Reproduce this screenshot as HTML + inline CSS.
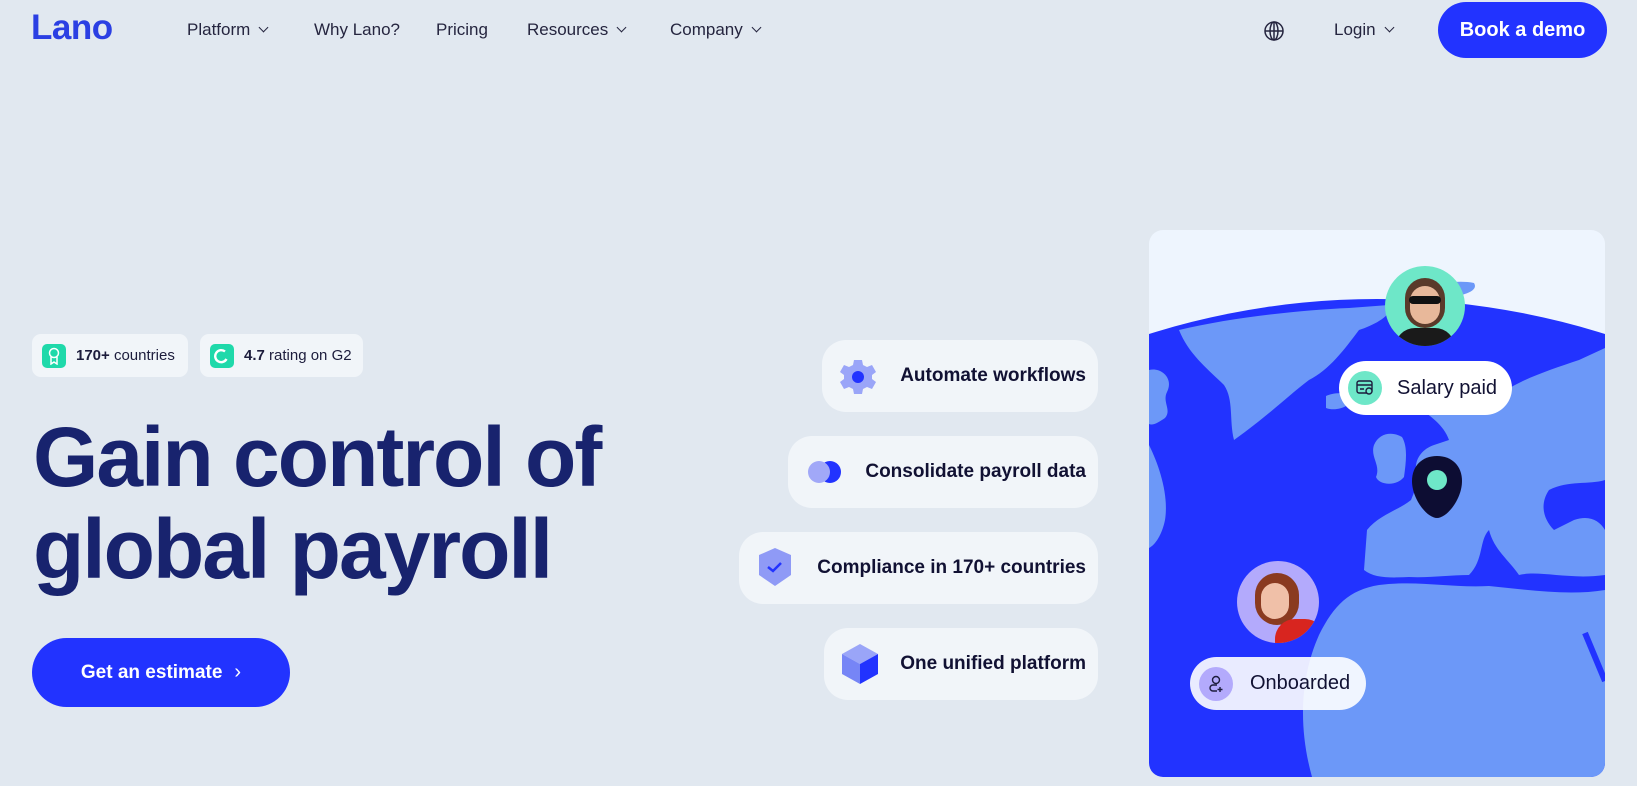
<!DOCTYPE html>
<html><head><meta charset="utf-8"><style>
*{margin:0;padding:0;box-sizing:border-box}
body{width:1637px;height:786px;background:#e1e8f0;font-family:"Liberation Sans",sans-serif;position:relative;overflow:hidden;color:#1c1c3c}
.a{position:absolute}
.nav{font-size:17px;top:20px;color:#25253f}
.chev{display:inline-block;width:7px;height:7px;border-right:1.8px solid #25253f;border-bottom:1.8px solid #25253f;transform:rotate(45deg);margin-left:10px;position:relative;top:-4px}
.badge{top:334px;height:43px;background:#f1f5f9;border-radius:9px;font-size:15px;display:flex;align-items:center;padding-left:10px}
.bi{width:24px;height:24px;background:#1fd9aa;border-radius:5px;margin-right:10px;display:flex;align-items:center;justify-content:center}
.pill{height:72px;background:#f1f5f9;border-radius:24px;right:539px;display:flex;align-items:center;justify-content:flex-end;padding-right:12px;font-weight:bold;font-size:19px;color:#111133}
.pill svg{position:absolute}
</style></head><body>
<div class="a" style="left:31px;top:8px;font-size:35px;font-weight:bold;color:#2b3fe3;letter-spacing:-0.5px">Lano</div>
<div class="a nav" style="left:187px">Platform<span class="chev"></span></div>
<div class="a nav" style="left:314px">Why Lano?</div>
<div class="a nav" style="left:436px">Pricing</div>
<div class="a nav" style="left:527px">Resources<span class="chev"></span></div>
<div class="a nav" style="left:670px">Company<span class="chev"></span></div>
<svg class="a" style="left:1263px;top:20px" width="22" height="22" viewBox="0 0 22 22" fill="none" stroke="#25253f" stroke-width="1.5"><circle cx="11" cy="11" r="9"/><ellipse cx="11" cy="11" rx="4" ry="9"/><path d="M2 11h18M11 2v18"/></svg>
<div class="a nav" style="left:1334px">Login<span class="chev"></span></div>
<div class="a" style="left:1438px;top:2px;width:169px;height:56px;background:#2233ff;border-radius:28px;color:#fff;font-size:20px;font-weight:bold;display:flex;align-items:center;justify-content:center">Book a demo</div>

<div class="a badge" style="left:32px;width:156px"><div class="bi"><svg width="14" height="18" viewBox="0 0 14 18" fill="none" stroke="#fff" stroke-width="1.5"><circle cx="7" cy="6" r="4.5"/><path d="M4 10v7l3-2 3 2v-7"/></svg></div><b>170+</b>&nbsp;countries</div>
<div class="a badge" style="left:200px;width:163px"><div class="bi"><svg width="16" height="16" viewBox="0 0 16 16" fill="none" stroke="#fff" stroke-width="2.4"><path d="M11 3.5A6 6 0 1 0 12.5 11"/></svg></div><b>4.7</b>&nbsp;rating on G2</div>

<div class="a" style="left:33px;top:411px;font-size:84px;line-height:92px;font-weight:bold;color:#18236e;letter-spacing:-2px">Gain control of<br>global payroll</div>
<div class="a" style="left:32px;top:638px;width:258px;height:69px;background:#2233ff;border-radius:35px;color:#fff;font-size:19px;font-weight:bold;display:flex;align-items:center;justify-content:center">Get an estimate<span style="margin-left:12px;font-weight:normal;font-size:20px">›</span></div>

<div class="a pill" style="left:822px;top:340px"><svg style="left:16px;top:17px" width="40" height="40" viewBox="0 0 40 40"><path fill="#9aa5f8" d="M16 3h8l1 5 4 2 5-2 4 7-4 3v4l4 3-4 7-5-2-4 2-1 5h-8l-1-5-4-2-5 2-4-7 4-3v-4l-4-3 4-7 5 2 4-2z"/><circle cx="20" cy="20" r="6" fill="#2233ff"/></svg>Automate workflows</div>
<div class="a pill" style="left:788px;top:436px"><svg style="left:15px;top:16px" width="44" height="40" viewBox="0 0 44 40"><circle cx="27" cy="20" r="11" fill="#2233ff"/><circle cx="16" cy="20" r="11" fill="#a1a8f8"/></svg>Consolidate payroll data</div>
<div class="a pill" style="left:739px;top:532px"><svg style="left:18px;top:14px" width="36" height="42" viewBox="0 0 36 42"><path fill="#8f9af6" d="M18 2l16 7v20l-16 11L2 29V9z"/><path d="M11 21l5 4 8-8" stroke="#2233ff" stroke-width="2.5" fill="none"/></svg>Compliance in 170+ countries</div>
<div class="a pill" style="left:824px;top:628px"><svg style="left:16px;top:15px" width="40" height="42" viewBox="0 0 40 42"><path fill="#9aa5f8" d="M20 1l18 10-18 10L2 11z"/><path fill="#7685f6" d="M2 11l18 10v20L2 31z"/><path fill="#2233ff" d="M38 11L20 21v20l18-10z"/></svg>One unified platform</div>

<div class="a" style="left:1149px;top:230px;width:456px;height:547px;border-radius:14px;overflow:hidden;background:#eef5fe">
<svg width="456" height="547" viewBox="0 0 456 547">
<circle cx="228" cy="829" r="760" fill="#2233ff"/>
<g fill="#6c98f8">
<path d="M30 100C80 88 150 80 200 78L240 75C245 85 225 95 210 100C195 120 180 140 160 150C140 165 120 185 85 210C80 190 85 170 75 155C60 140 40 125 30 100z"/>
<path d="M0 140c12-3 25 8 18 22-5 10 5 18-2 26-6 4-12 8-16 6z"/>
<path d="M0 215c10 20 20 50 16 75-3 15-10 25-16 28z"/>
<path d="M177 166c8-4 22-4 27 2-2 8-16 14-27 10z"/>
<path d="M225 215c5-12 18-14 28-8 6 10 4 25 2 40-8 10-25 8-28 0 5-12-6-20-2-32z"/>
<path d="M270 58c20-5 40-8 55-5 5 8-10 12-25 15-15 3-30 0-30-10z"/>
<path d="M215 340L218 300C230 285 250 280 262 270L270 250C262 235 270 220 285 215L300 210C295 195 280 185 270 178C255 170 245 160 250 150C270 145 300 150 320 160L350 165C370 150 400 140 430 130L456 118L456 250C440 255 420 250 400 260C390 275 395 290 405 300L425 290C440 285 450 290 456 300L456 345C420 350 390 340 370 345C360 330 345 320 340 300C330 310 335 330 320 345C300 345 280 348 260 347C240 348 225 348 215 340z"/>
<path d="M163 547C150 500 150 450 170 405C185 375 200 360 230 355C270 350 300 358 340 356C380 360 420 366 456 360L456 547z"/>
</g>
<path d="M436 403l20 48" stroke="#2233ff" stroke-width="6"/>
</svg>
<div class="a" style="left:236px;top:36px;width:80px;height:80px;border-radius:50%;background:#6ee7c8;overflow:hidden"><div class="a" style="left:20px;top:12px;width:40px;height:50px;border-radius:20px;background:#5a3a2a"></div><div class="a" style="left:25px;top:20px;width:30px;height:38px;border-radius:15px;background:#e8b89a"></div><div class="a" style="left:24px;top:30px;width:32px;height:8px;border-radius:4px;background:#111"></div><div class="a" style="left:10px;top:62px;width:60px;height:30px;border-radius:20px 20px 0 0;background:#1a1a1a"></div></div>
<div class="a" style="left:190px;top:131px;width:173px;height:54px;border-radius:27px;background:#fff;display:flex;align-items:center"><div style="width:34px;height:34px;border-radius:50%;background:#6ee7c8;margin:0 15px 0 9px;display:flex;align-items:center;justify-content:center"><svg width="18" height="16" viewBox="0 0 18 16" fill="none" stroke="#1c1c3c" stroke-width="1.4"><rect x="1" y="1" width="15" height="12" rx="2"/><path d="M1 5h15M4 9h4"/><circle cx="13" cy="11" r="3" fill="#6ee7c8"/></svg></div><span style="font-size:20px;color:#111133">Salary paid</span></div>
<svg class="a" style="left:261px;top:224px" width="54" height="66" viewBox="0 0 54 66"><path d="M27 2C12 2 2 12 2 27c0 18 15 37 25 37s25-19 25-37C52 12 42 2 27 2z" fill="#0d0d33"/><circle cx="27" cy="26" r="10" fill="#6ee7c8"/></svg>
<div class="a" style="left:88px;top:331px;width:82px;height:82px;border-radius:50%;background:#b3aafc;overflow:hidden"><div class="a" style="left:18px;top:12px;width:44px;height:52px;border-radius:22px;background:#8a3a20"></div><div class="a" style="left:24px;top:22px;width:28px;height:36px;border-radius:14px;background:#f0c0a8"></div><div class="a" style="left:38px;top:58px;width:50px;height:40px;border-radius:20px 20px 0 0;background:#d8251f"></div></div>
<div class="a" style="left:41px;top:427px;width:176px;height:53px;border-radius:27px;background:rgba(255,255,255,.9);display:flex;align-items:center"><div style="width:34px;height:34px;border-radius:50%;background:#b3aafc;margin:0 17px 0 9px;display:flex;align-items:center;justify-content:center"><svg width="16" height="18" viewBox="0 0 16 18" fill="none" stroke="#1c1c3c" stroke-width="1.4"><circle cx="8" cy="5" r="3.5"/><path d="M9 16H5a3 3 0 0 1 0-6h4M12 12v5M9.5 14.5h5"/></svg></div><span style="font-size:20px;color:#111133">Onboarded</span></div>
</div>
</body></html>
